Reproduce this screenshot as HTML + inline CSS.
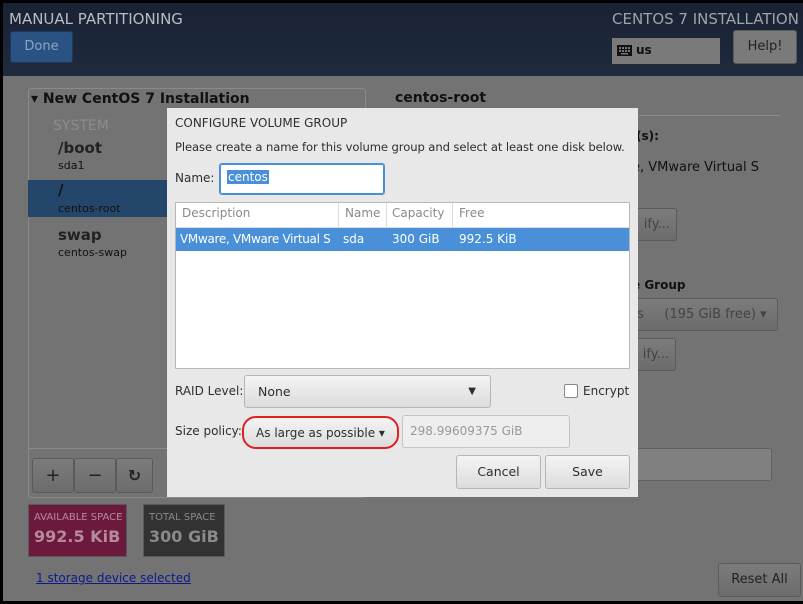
<!DOCTYPE html>
<html><head><meta charset="utf-8"><style>
*{box-sizing:border-box;margin:0;padding:0}
body{width:803px;height:604px;background:#000;font-family:"DejaVu Sans","Liberation Sans",sans-serif;overflow:hidden;position:relative}
.a{position:absolute}
#main{left:3px;top:3px;width:800px;height:598px;background:#737373}
#hdr{left:3px;top:3px;width:800px;height:73px;background:linear-gradient(#1a2233,#1e2a3e)}
.t{white-space:nowrap}
.btn{border:1px solid #5a5a5a;border-radius:3px;background:linear-gradient(#7c7c7c,#6c6c6c);color:#222;font-size:13px;text-align:center}
.dbtn{border:1px solid #b5b5b5;border-radius:3px;background:linear-gradient(#f4f4f4,#dcdcdc);color:#2e2e2e;font-size:12.5px;text-align:center}
</style></head><body>
<div class="a" id="main"></div>
<div class="a" id="hdr"></div>
<div class="a t" style="left:9px;top:10px;color:#b8bcc4;font-size:15px">MANUAL PARTITIONING</div>
<div class="a" style="left:10px;top:31px;width:63px;height:32px;background:#2a5384;border:1px solid #1c3a60;border-radius:3px;color:#8ea5c0;font-size:13px;text-align:center;line-height:30px">Done</div>
<div class="a t" style="left:612px;top:10px;color:#9ea3ab;font-size:15px">CENTOS 7 INSTALLATION</div>
<div class="a" style="left:612px;top:38px;width:108px;height:26px;background:#7a7a7a"></div>
<svg class="a" style="left:617px;top:45px" width="15" height="11" viewBox="0 0 15 11"><rect width="15" height="11" fill="#111"/><g fill="#777"><rect x="2" y="2" width="2" height="2"/><rect x="5" y="2" width="2" height="2"/><rect x="8" y="2" width="2" height="2"/><rect x="11" y="2" width="2" height="2"/><rect x="2" y="5" width="2" height="2"/><rect x="5" y="5" width="2" height="2"/><rect x="8" y="5" width="2" height="2"/><rect x="11" y="5" width="2" height="2"/><rect x="4" y="8" width="7" height="1.5"/></g></svg>
<div class="a t" style="left:636px;top:43px;color:#111;font-size:12px;font-weight:bold">us</div>
<div class="a btn" style="left:733px;top:30px;width:64px;height:34px;line-height:32px;background:#7a7a7a;color:#222">Help!</div>

<!-- left panel -->
<div class="a" style="left:28px;top:88px;width:338px;height:410px;border:1px solid #8a8a8a;border-radius:3px"></div>
<div class="a" style="left:28px;top:448px;width:338px;height:1px;background:#8a8a8a"></div>
<div class="a t" style="left:31px;top:91px;color:#111;font-size:14px;font-weight:bold">▾ New CentOS 7 Installation</div>
<div class="a t" style="left:53px;top:118px;color:#8c8c8c;font-size:14px">SYSTEM</div>
<div class="a t" style="left:58px;top:139px;color:#222;font-size:15px;font-weight:bold">/boot</div>
<div class="a t" style="left:58px;top:159px;color:#111;font-size:11px">sda1</div>
<div class="a" style="left:28px;top:180px;width:140px;height:37px;background:#24466b"></div>
<div class="a t" style="left:58px;top:181px;color:#111;font-size:15px;font-weight:bold">/</div>
<div class="a t" style="left:58px;top:202px;color:#111;font-size:11px">centos-root</div>
<div class="a t" style="left:58px;top:226px;color:#222;font-size:15px;font-weight:bold">swap</div>
<div class="a t" style="left:58px;top:246px;color:#111;font-size:11px">centos-swap</div>
<div class="a btn" style="left:32px;top:458px;width:42px;height:35px;line-height:33px;font-size:18px">+</div>
<div class="a btn" style="left:74px;top:458px;width:42px;height:35px;line-height:33px;font-size:18px">−</div>
<div class="a btn" style="left:116px;top:458px;width:37px;height:35px;line-height:33px;font-size:16px;font-weight:bold">↻</div>
<div class="a" style="left:28px;top:504px;width:99px;height:53px;background:#6b1a3e;border:1px solid #5a5a5a"></div>
<div class="a t" style="left:34px;top:512px;color:#b58a9c;font-size:10px">AVAILABLE SPACE</div>
<div class="a t" style="left:34px;top:527px;color:#b58a9c;font-size:16px;font-weight:bold">992.5 KiB</div>
<div class="a" style="left:143px;top:504px;width:82px;height:53px;background:#323232;border:1px solid #5a5a5a"></div>
<div class="a t" style="left:149px;top:512px;color:#8a8a8a;font-size:10px">TOTAL SPACE</div>
<div class="a t" style="left:149px;top:527px;color:#8a8a8a;font-size:16px;font-weight:bold">300 GiB</div>
<div class="a t" style="left:36px;top:571px;color:#0b1b8c;font-size:12px;text-decoration:underline">1 storage device selected</div>
<div class="a btn" style="left:718px;top:563px;width:83px;height:34px;line-height:32px">Reset All</div>

<!-- right -->
<div class="a t" style="left:395px;top:90px;color:#111;font-size:14px;font-weight:bold">centos-root</div>
<div class="a" style="left:370px;top:115px;width:410px;height:1px;background:#888"></div>
<div class="a t" style="left:636px;top:129px;color:#111;font-size:12px;font-weight:bold">(s):</div>
<div class="a t" style="left:632px;top:160px;color:#111;font-size:13px">e, VMware Virtual S</div>
<div class="a btn" style="left:620px;top:208px;width:57px;height:33px;line-height:31px;text-align:right;padding-right:6px;color:#444">ify...</div>
<div class="a t" style="left:632px;top:278px;color:#111;font-size:12px;font-weight:bold">e Group</div>
<div class="a btn" style="left:620px;top:298px;width:158px;height:33px;line-height:31px;text-align:left;padding-left:16px;color:#444">s &nbsp;&nbsp;&nbsp; (195 GiB free) ▾</div>
<div class="a btn" style="left:620px;top:338px;width:56px;height:33px;line-height:31px;text-align:right;padding-right:6px;color:#444">ify...</div>
<div class="a" style="left:620px;top:448px;width:152px;height:33px;background:#808080;border:1px solid #606060;border-radius:3px"></div>

<!-- dialog -->
<div class="a" style="left:167px;top:108px;width:471px;height:389px;background:#e8e8e8"></div>
<div class="a t" style="left:175px;top:116px;color:#2e2e2e;font-size:12px">CONFIGURE VOLUME GROUP</div>
<div class="a t" style="left:175px;top:140px;color:#2e2e2e;font-size:11.6px;letter-spacing:-0.1px">Please create a name for this volume group and select at least one disk below.</div>
<div class="a t" style="left:175px;top:171px;color:#2e2e2e;font-size:12px">Name:</div>
<div class="a" style="left:219px;top:163px;width:166px;height:32px;background:#fff;border:1px solid #4a90d9;border-radius:3px;box-shadow:0 0 0 1px #4a90d9 inset"></div>
<div class="a t" style="left:227px;top:170px;background:#4a90d9;color:#fff;font-size:12px;padding:0 1px">centos</div>
<div class="a" style="left:175px;top:202px;width:455px;height:167px;background:#fff;border:1px solid #b8b8b8"></div>
<div class="a" style="left:176px;top:227px;width:453px;height:1px;background:#ddd"></div>
<div class="a" style="left:338px;top:203px;width:1px;height:24px;background:#ddd"></div>
<div class="a" style="left:386px;top:203px;width:1px;height:24px;background:#ddd"></div>
<div class="a" style="left:452px;top:203px;width:1px;height:24px;background:#ddd"></div>
<div class="a t" style="left:182px;top:206px;color:#8a8a8a;font-size:12px">Description</div>
<div class="a t" style="left:345px;top:206px;color:#8a8a8a;font-size:12px">Name</div>
<div class="a t" style="left:392px;top:206px;color:#8a8a8a;font-size:12px">Capacity</div>
<div class="a t" style="left:459px;top:206px;color:#8a8a8a;font-size:12px">Free</div>
<div class="a" style="left:176px;top:228px;width:453px;height:23px;background:#4a90d9"></div>
<div class="a t" style="left:180px;top:232px;width:155px;overflow:hidden;color:#fff;font-size:12px;letter-spacing:-0.3px">VMware, VMware Virtual S</div>
<div class="a t" style="left:343px;top:232px;color:#fff;font-size:12px">sda</div>
<div class="a t" style="left:392px;top:232px;color:#fff;font-size:12px">300 GiB</div>
<div class="a t" style="left:459px;top:232px;color:#fff;font-size:12px">992.5 KiB</div>
<div class="a t" style="left:175px;top:384px;color:#2e2e2e;font-size:12px">RAID Level:</div>
<div class="a dbtn" style="left:244px;top:375px;width:247px;height:33px;line-height:31px;text-align:left;padding-left:13px">None<span style="position:absolute;right:14px;font-size:10px">▼</span></div>
<div class="a" style="left:564px;top:384px;width:14px;height:14px;background:#fff;border:1px solid #888;border-radius:2px"></div>
<div class="a t" style="left:583px;top:384px;color:#2e2e2e;font-size:12px">Encrypt</div>
<div class="a t" style="left:175px;top:424px;color:#2e2e2e;font-size:12px">Size policy:</div>
<div class="a dbtn" style="left:242px;top:416px;width:157px;height:33px;line-height:30px;font-size:12px;border:2px solid #e02020;border-radius:14px">As large as possible ▾</div>
<div class="a" style="left:402px;top:415px;width:168px;height:33px;background:#eee;border:1px solid #c4c4c4;border-radius:3px"></div>
<div class="a t" style="left:410px;top:424px;color:#999;font-size:12px">298.99609375 GiB</div>
<div class="a dbtn" style="left:456px;top:455px;width:85px;height:34px;line-height:32px">Cancel</div>
<div class="a dbtn" style="left:545px;top:455px;width:85px;height:34px;line-height:32px">Save</div>
</body></html>
